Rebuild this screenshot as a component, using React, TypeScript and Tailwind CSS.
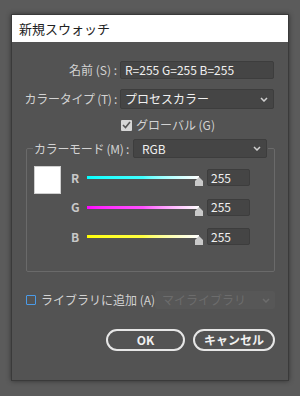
import React from 'react';

const font = { fontFamily: '"Noto Sans CJK JP", "Noto Sans", sans-serif' };

const Chevron: React.FC<{ className?: string }> = ({ className }) => (
  <svg width="8" height="5" viewBox="0 0 8 5" className={className}>
    <path d="M1 1 L4 4 L7 1" fill="none" stroke="currentColor" strokeWidth="1.5" />
  </svg>
);

const Thumb: React.FC = () => (
  <svg width="8" height="9" viewBox="0 0 8 9" className="absolute right-[-4px] top-[1px]">
    <path d="M4 0 L8 4 L8 9 L0 9 L0 4 Z" fill="#c9c9c9" />
  </svg>
);

const sliders = [
  { label: 'R', track: 'bg-gradient-to-r from-[#00ffff] via-[#40ffff] to-white' },
  { label: 'G', track: 'bg-gradient-to-r from-[#ff00ff] via-[#ff50ff] to-white' },
  { label: 'B', track: 'bg-gradient-to-r from-[#ffff00] via-[#ffff40] to-white' },
];

export default function App() {
  return (
    <div className="w-[300px] h-[396px] bg-[#5b5b5b] pt-[14px] pl-[11px] text-[12px] text-[#d2d2d2]" style={font}>
      <div className="w-[278px] h-[367px] bg-[#535353] border border-[#3a3a3a] shadow-[0_0_5px_rgba(0,0,0,0.45)] flex flex-col">
        <div className="h-[27px] bg-white flex items-center pl-[7px] text-[13px] text-[#222]">新規スウォッチ</div>

        <div className="flex flex-col pr-[13px]">
          <div className="flex items-center mt-[19px] h-[18px]">
            <span className="w-[105px] text-right">名前 (S) :</span>
            <div className="ml-[3px] w-[154px] h-[18px] bg-[#454545] border border-[#3d3d3d] rounded-[2px] flex items-center pl-[4px] text-[#f0f0f0]">
              R=255 G=255 B=255
            </div>
          </div>

          <div className="flex items-center mt-[10px] h-[20px]">
            <span className="w-[105px] text-right whitespace-nowrap tracking-[-0.3px]">カラータイプ (T) :</span>
            <div className="ml-[3px] w-[154px] h-[20px] bg-[#454545] border border-[#3d3d3d] rounded-[2px] flex items-center justify-between pl-[4px] pr-[5px] text-[#f0f0f0]">
              <span>プロセスカラー</span>
              <Chevron className="text-[#d0d0d0]" />
            </div>
          </div>

          <div className="flex items-center mt-[10px] pl-[109px] h-[12px]">
            <div className="w-[11px] h-[11px] bg-[#d6d6d6] rounded-[1px] flex items-center justify-center">
              <svg width="9" height="8" viewBox="0 0 9 8">
                <path d="M1 4 L3.5 6.5 L8 1" fill="none" stroke="#555" strokeWidth="1.6" />
              </svg>
            </div>
            <span className="ml-[4px]">グローバル (G)</span>
          </div>

          <fieldset className="ml-[14px] mt-[8px] border border-[#6a6a6a] rounded-[2px] h-[133px]">
            <legend className="ml-[6px] px-[1px]">
              <div className="flex items-center h-[19px]">
                <span className="whitespace-nowrap tracking-[-0.3px]">カラーモード (M) :</span>
                <div className="ml-[4px] w-[134px] h-[19px] bg-[#454545] border border-[#3d3d3d] rounded-[2px] flex items-center justify-between pl-[8px] pr-[5px] text-[#f0f0f0]">
                  <span>RGB</span>
                  <Chevron className="text-[#d0d0d0]" />
                </div>
              </div>
            </legend>
            <div className="flex pl-[7px] pt-[8px]">
              <div className="w-[27px] h-[28px] bg-white border border-[#cfcfcf]" />
              <div className="flex flex-col gap-[12px] pt-[3px] ml-[7px]">
                {sliders.map((s) => (
                  <div key={s.label} className="flex items-center h-[17.5px]">
                    <span className="w-[19px] pl-[3px] font-bold text-[#c8c8c8]">{s.label}</span>
                    <div className="relative w-[112px] h-[3px]">
                      <div className={`w-full h-full ${s.track}`} />
                      <Thumb />
                    </div>
                    <div className="ml-[8px] w-[43px] h-[17px] bg-[#454545] border border-[#3d3d3d] rounded-[2px] flex items-center pl-[3px] text-[#f0f0f0]">
                      255
                    </div>
                  </div>
                ))}
              </div>
            </div>
          </fieldset>

          <div className="flex items-center mt-[19px] pl-[14px] h-[18px]">
            <div className="w-[10px] h-[10px] border-[1.5px] border-[#4b9be8] rounded-[1px]" />
            <span className="ml-[5px] whitespace-nowrap">ライブラリに追加 (A)</span>
            <div className="ml-auto w-[120px] h-[18px] bg-[#575757] rounded-[2px] flex items-center justify-between pl-[7px] pr-[5px] text-[#6c6c6c]">
              <span>マイライブラリ</span>
              <Chevron className="text-[#6c6c6c]" />
            </div>
          </div>

          <div className="flex justify-end gap-[8px] mt-[20px]">
            <button className="w-[79px] h-[22px] rounded-full border-2 border-[#e6e6e6] font-bold text-[#f0f0f0] flex items-center justify-center">
              OK
            </button>
            <button className="w-[82px] h-[22px] rounded-full border-2 border-[#e6e6e6] font-bold text-[#f0f0f0] flex items-center justify-center">
              キャンセル
            </button>
          </div>
        </div>
      </div>
    </div>
  );
}
